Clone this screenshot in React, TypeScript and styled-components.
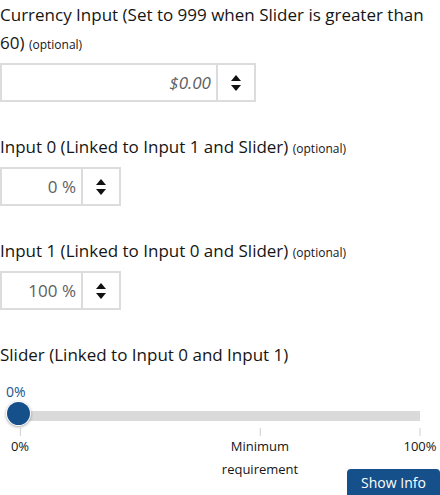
import styled, { createGlobalStyle } from "styled-components";

const GlobalStyle = createGlobalStyle`
  html, body {
    margin: 0;
    padding: 0;
    background: #ffffff;
  }
  body {
    font-family: "Open Sans", "Noto Sans", sans-serif;
    color: #151515;
  }
`;

const Page = styled.div`
  display: flex;
  flex-direction: column;
  width: 440px;
  min-height: 495px;
  box-sizing: border-box;
  padding-top: 1px;
`;

const FieldGroup = styled.div<{ mb: string }>`
  display: flex;
  flex-direction: column;
  margin-bottom: ${(props) => props.mb};
`;

const Label = styled.label`
  display: block;
  font-size: 17px;
  line-height: 28px;
  color: #151515;
  margin-bottom: 6px;
`;

const Optional = styled.span`
  font-size: 12px;
  line-height: 1;
`;

const NumberBox = styled.div<{ width: string }>`
  display: flex;
  width: ${(props) => props.width};
  height: 39px;
  box-sizing: border-box;
  border: 2px solid #dcdcdc;
`;

const NumberValue = styled.div<{ italic?: boolean }>`
  flex: 1;
  display: flex;
  align-items: center;
  justify-content: flex-end;
  padding-right: 5px;
  font-size: 17px;
  color: #5e5e5e;
  font-style: ${(props) => (props.italic ? "italic" : "normal")};
  border-right: 2px solid #dcdcdc;
`;

const Spinner = styled.div`
  width: 36px;
  display: flex;
  flex-direction: column;
  align-items: center;
  justify-content: center;
  gap: 4px;
`;

const Arrow = styled.div<{ down?: boolean }>`
  width: 0;
  height: 0;
  border-left: 5px solid transparent;
  border-right: 5px solid transparent;
  ${(props) =>
    props.down
      ? "border-top: 6px solid #111;"
      : "border-bottom: 6px solid #111;"}
`;

const SliderArea = styled.div`
  display: flex;
  flex-direction: column;
`;

const ValueLabel = styled.div`
  font-size: 14px;
  line-height: 16px;
  color: #1a5490;
  margin: 9px 0 0 6px;
`;

const Track = styled.div`
  position: relative;
  margin: 11px 0 0 10px;
  width: 410px;
  height: 10px;
  background: #dadada;
`;

const Range = styled.div`
  position: absolute;
  left: 10px;
  right: 0;
  top: 0;
  bottom: 0;
`;

const Thumb = styled.div`
  position: absolute;
  top: -9px;
  width: 23px;
  height: 23px;
  margin-left: -13px;
  border-radius: 50%;
  background: #15508b;
  box-shadow: 0 0 0 1px #ffffff, 0 1px 3px 1px rgba(0, 0, 0, 0.35);
`;

const Scale = styled.div`
  position: relative;
  margin: 7px 0 0 20px;
  width: 400px;
  height: 60px;
`;

const Tick = styled.div`
  position: absolute;
  top: 0;
  display: flex;
  flex-direction: column;
  align-items: center;
  transform: translateX(-50%);
`;

const TickMark = styled.div`
  width: 1px;
  height: 8px;
  background: #cfcfcf;
`;

const TickText = styled.div`
  font-size: 13px;
  line-height: 23px;
  margin-top: -1px;
  text-align: center;
  color: #151515;
  white-space: nowrap;
`;

const InfoButton = styled.button`
  position: fixed;
  right: 0;
  bottom: 0;
  width: 93px;
  height: 26px;
  border: none;
  border-radius: 4px 4px 0 0;
  background: #15508a;
  color: #ffffff;
  font-family: "Open Sans", "Noto Sans", sans-serif;
  font-size: 14px;
  padding: 0;
`;

type NumberFieldProps = {
  label: string;
  value: string;
  width: string;
  italic?: boolean;
  mb: string;
};

const NumberField = ({ label, value, width, italic, mb }: NumberFieldProps) => (
  <FieldGroup mb={mb}>
    <Label>
      {label} <Optional>(optional)</Optional>
    </Label>
    <NumberBox width={width}>
      <NumberValue italic={italic}>{value}</NumberValue>
      <Spinner>
        <Arrow />
        <Arrow down />
      </Spinner>
    </NumberBox>
  </FieldGroup>
);

const ticks = [
  { pct: 0, text: ["0%"] },
  { pct: 60, text: ["Minimum", "requirement"] },
  { pct: 100, text: ["100%"] },
];

export default function App() {
  const value = 0;
  return (
    <Page>
      <GlobalStyle />
      <NumberField
        label="Currency Input (Set to 999 when Slider is greater than 60)"
        value="$0.00"
        width="256px"
        italic
        mb="31px"
      />
      <NumberField
        label="Input 0 (Linked to Input 1 and Slider)"
        value="0 %"
        width="121px"
        mb="31px"
      />
      <NumberField
        label="Input 1 (Linked to Input 0 and Slider)"
        value="100 %"
        width="121px"
        mb="31px"
      />
      <Label>Slider (Linked to Input 0 and Input 1)</Label>
      <SliderArea>
        <ValueLabel>{value}%</ValueLabel>
        <Track>
          <Range>
            <Thumb style={{ left: `${value}%` }} />
          </Range>
        </Track>
        <Scale>
          {ticks.map((t) => (
            <Tick key={t.pct} style={{ left: `${t.pct}%` }}>
              <TickMark />
              <TickText>
                {t.text.map((line, i) => (
                  <div key={i}>{line}</div>
                ))}
              </TickText>
            </Tick>
          ))}
        </Scale>
      </SliderArea>
      <InfoButton>Show Info</InfoButton>
    </Page>
  );
}
